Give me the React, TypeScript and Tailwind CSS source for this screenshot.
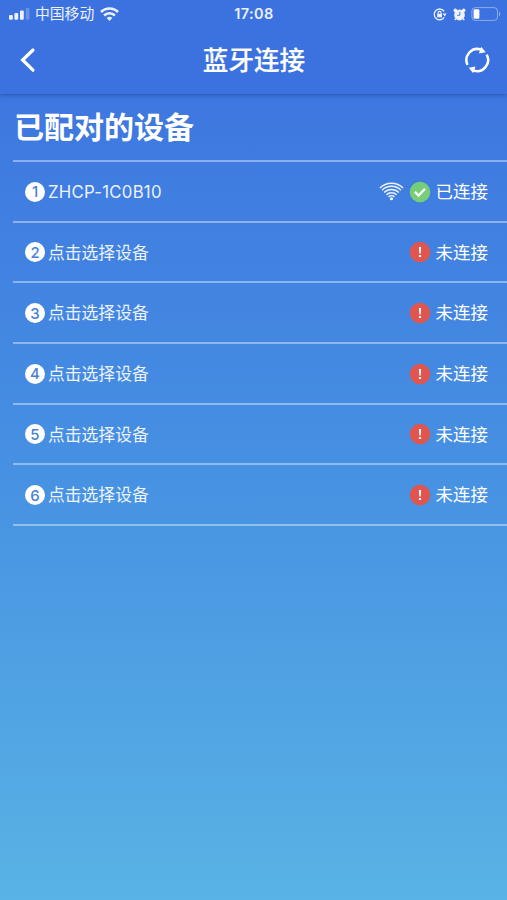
type Device = {
  id: number;
  name: string;
  connected: boolean;
};

const devices: Device[] = [
  { id: 1, name: "ZHCP-1C0B10", connected: true },
  { id: 2, name: "点击选择设备", connected: false },
  { id: 3, name: "点击选择设备", connected: false },
  { id: 4, name: "点击选择设备", connected: false },
  { id: 5, name: "点击选择设备", connected: false },
  { id: 6, name: "点击选择设备", connected: false },
];

function StatusBar() {
  return (
    <div className="grid h-7 grid-cols-[1fr_auto_1fr] items-center pl-[9px] pr-[6px] text-white/90">
      <div className="flex items-center">
        <svg width="21" height="12" viewBox="0 0 21 12" fill="currentColor">
          <rect x="0" y="7" width="3.8" height="4.7" rx="1" />
          <rect x="5.4" y="5" width="3.8" height="6.7" rx="1" />
          <rect x="11" y="2.4" width="3.8" height="9.3" rx="1" />
          <rect x="16.8" y="0" width="3.6" height="11.7" rx="1" opacity="0.25" />
        </svg>
        <span className="ml-[5px] text-[14.8px] leading-none">中国移动</span>
        <svg className="ml-[6px]" width="19" height="14" viewBox="0 0 19 14" fill="none" stroke="currentColor" strokeWidth="2.6">
          <path d="M1 5a12 12 0 0 1 17 0" />
          <path d="M4.1 8.5a7.6 7.6 0 0 1 10.8 0" />
          <path d="M9.5 13.9 6.7 11a4 4 0 0 1 5.6 0z" fill="currentColor" stroke="none" />
        </svg>
      </div>
      <span className="mr-[2px] text-[14.5px] font-semibold leading-none tracking-[0.4px]">17:08</span>
      <div className="flex items-center justify-end">
        <svg width="14" height="13" viewBox="0 0 14 13" fill="none" stroke="currentColor" strokeWidth="1.3">
          <path d="M11.2 3.4A5.4 5.4 0 1 0 11.2 9.4" />
          <path d="M9.6 5.4h4l-2 3.2z" fill="currentColor" stroke="none" />
          <rect x="4.2" y="5.8" width="4.8" height="3.5" fill="currentColor" stroke="none" />
          <path d="M5.1 6V4.9a1.5 1.5 0 0 1 3 0V6" strokeWidth="1.1" />
        </svg>
        <svg className="ml-[6px]" width="13" height="13" viewBox="0 0 13 13" fill="currentColor">
          <circle cx="6.5" cy="7" r="5.4" />
          <circle cx="2.3" cy="2.4" r="1.8" />
          <circle cx="10.7" cy="2.4" r="1.8" />
          <path d="M2.8 10.6 1.8 12M10.2 10.6l1 1.4" stroke="currentColor" strokeWidth="1.5" />
          <path d="M6.8 3.8v3.5H4.2" fill="none" stroke="#3c71de" strokeWidth="0.9" />
        </svg>
        <svg className="ml-[5px]" width="30" height="14" viewBox="0 0 30 14" fill="none">
          <rect x="0.9" y="0.6" width="25.6" height="12.8" rx="3.4" stroke="currentColor" strokeOpacity="0.45" />
          <rect x="2.6" y="2.2" width="5.8" height="9.6" rx="1.4" fill="#fff" />
          <path d="M28 4.8c1.7.6 1.7 3.8 0 4.4z" fill="currentColor" opacity="0.45" />
        </svg>
      </div>
    </div>
  );
}

function NavBar() {
  return (
    <div className="grid h-[66px] grid-cols-[1fr_auto_1fr] items-center pb-[2px] pl-5 pr-4">
      <svg width="16" height="26" viewBox="0 0 16 26" fill="none" stroke="#fff" strokeWidth="3.2" strokeLinecap="round">
        <path d="M13 3 2.6 13 13 23.2" />
      </svg>
      <h1 className="mr-[3px] mt-[2px] text-[25.6px] font-medium leading-none [-webkit-text-stroke:0.2px_white]">蓝牙连接</h1>
      <svg className="justify-self-end" width="28" height="28" viewBox="0 0 28 28" fill="none" stroke="#fff" strokeWidth="2.5">
        <path d="M4.6 18.9A11 11 0 0 1 18 3.6" />
        <path d="M23.6 8.6A11 11 0 0 1 10.3 24.4" />
        <path d="M18.2.7 22.7 6.3 15.9 7.4z" fill="#fff" stroke="none" />
        <path d="M10.2 27.3 5.7 21.7l6.8-1.1z" fill="#fff" stroke="none" />
      </svg>
    </div>
  );
}

function SignalIcon() {
  return (
    <svg className="mr-[5px]" width="25" height="19" viewBox="0 0 26 19" fill="none" stroke="#fff" strokeOpacity="0.9" strokeWidth="1.5">
      <path d="M1 5.8a17 17 0 0 1 24 0" />
      <path d="M3.2 8.2a13.8 13.8 0 0 1 19.6 0" />
      <path d="M5.4 10.6a10.7 10.7 0 0 1 15.2 0" />
      <path d="M7.7 12.9a7.5 7.5 0 0 1 10.6 0" />
      <path d="M9.9 15.2a4.4 4.4 0 0 1 6.2 0" />
      <circle cx="13" cy="17" r="1.6" fill="#fff" stroke="none" />
    </svg>
  );
}

function StateIcon({ connected }: { connected: boolean }) {
  return (
    <svg width="22" height="22" viewBox="0 0 22 22">
      <circle cx="11" cy="11" r="10.3" fill={connected ? "#76cf78" : "#e0564f"} />
      {connected ? (
        <path d="m5.9 10.9 3.7 3.7 6.4-6.8" fill="none" stroke="#fff" strokeWidth="2.3" />
      ) : (
        <path d="M9.9 6h2.2l-.4 6.6h-1.4zM9.9 14h2.2v2.1H9.9z" fill="#fff" />
      )}
    </svg>
  );
}

function DeviceRow({ device }: { device: Device }) {
  return (
    <li className="flex h-[60.67px] items-center border-b-2 border-white/40 pl-3 pr-[19px] pt-px">
      <span className="flex size-5 items-center justify-center rounded-full bg-white text-[15px] font-medium leading-none text-[#4a7fd8]">
        {device.id}
      </span>
      <span className="ml-[3px] flex-1 pt-px text-[16.8px] leading-none text-white/90">
        {device.connected ? <span className="tracking-[0.25px]">{device.name}</span> : device.name}
      </span>
      {device.connected && <SignalIcon />}
      <StateIcon connected={device.connected} />
      <span className="ml-[5px] text-[17.5px] leading-none">{device.connected ? "已连接" : "未连接"}</span>
    </li>
  );
}

export default function App() {
  return (
    <div className="flex h-[900px] w-full flex-col overflow-hidden bg-linear-to-b from-[#3c70df] via-[#468fe2] to-[#59b3e4] font-[Inter,'Noto_Sans_CJK_SC',sans-serif] text-white">
      <header className="bg-[#3c71e0] shadow-[0_1px_4px_rgba(20,50,120,0.5)]">
        <StatusBar />
        <NavBar />
      </header>
      <main className="pl-[13px]">
        <h2 className="flex h-[68px] items-center border-b-2 border-white/40 pl-px text-[30px] font-bold leading-none">
          已配对的设备
        </h2>
        <ul>
          {devices.map((device) => (
            <DeviceRow key={device.id} device={device} />
          ))}
        </ul>
      </main>
    </div>
  );
}
